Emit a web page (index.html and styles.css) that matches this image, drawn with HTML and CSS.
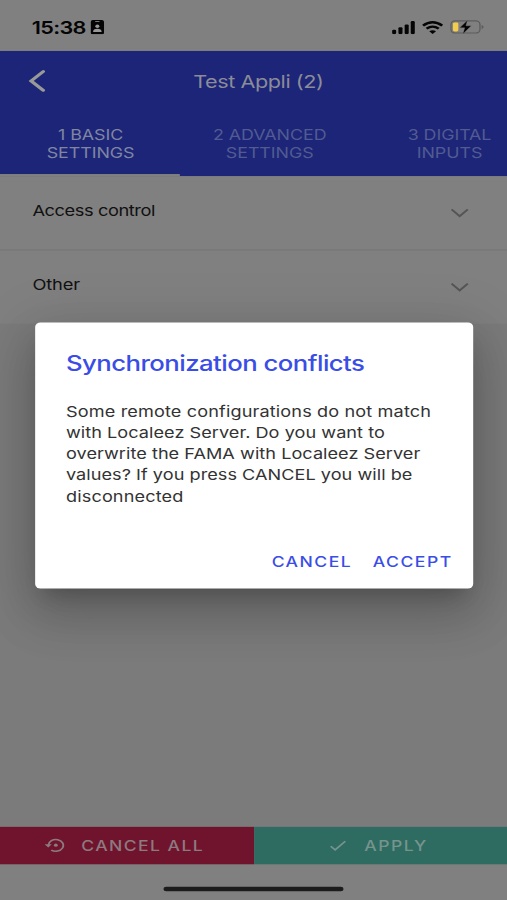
FILE: index.html
```html
<!DOCTYPE html>
<html lang="en">
<head>
<meta charset="utf-8">
<title>Test Appli (2)</title>
<link rel="stylesheet" href="styles.css">
</head>
<body>
<div class="screen">
  <div class="status">
    <span class="time">15:38</span>
    <svg class="badge" width="10" height="13" viewBox="0 0 10 13"><rect width="10" height="13" rx="2" fill="#050505"/><path d="M3.4 1.4h3.2" stroke="#777" stroke-width=".9"/><circle cx="5" cy="5.7" r="1.5" fill="#999"/><path d="M1.9 10.8V9.9Q2.4 8 5 8t3.1 1.9v.9z" fill="#999"/></svg>
    <span class="spacer"></span>
    <svg class="signal" width="17" height="12" viewBox="0 0 17 12" fill="#050505"><rect y="7.8" width="3" height="4" rx="1"/><rect x="4.7" y="5.6" width="3" height="6.2" rx="1"/><rect x="9.3" y="3" width="3" height="8.8" rx="1"/><rect x="13.8" y="0" width="3" height="11.8" rx="1"/></svg>
    <svg class="wifi" width="16" height="12" viewBox="0 0 16 12" fill="none" stroke="#050505" stroke-width="2.1"><path d="M.9 4.2Q8-2 15.1 4.2M3.5 6.9q4.5-3.7 9 0"/><path d="M5.5 9.2q2.5-2 5 0L8 11.7z" fill="#050505" stroke="none"/></svg>
    <svg class="battery" width="25" height="13" viewBox="0 0 25 13"><rect x=".5" y=".8" width="21.5" height="11" rx="3.2" fill="none" stroke="#5c5c5c"/><path d="M23.2 4.6q1.5.4 1.5 1.8t-1.5 1.8z" fill="#5c5c5c"/><rect x="2" y="2.2" width="4" height="8.2" rx="1.3" fill="#f2cd4d"/><path d="M12.8.2 7 7.1h3.7l-1.3 5.5 6.2-7.3h-4z" fill="#050505" stroke="#808080" stroke-width=".3"/></svg>
  </div>
  <header class="header">
    <div class="titlebar">
      <svg class="back" width="13" height="20" viewBox="0 0 13 20" fill="none" stroke="#999a98" stroke-width="2.6" stroke-linecap="round" stroke-linejoin="miter"><path d="M11 1.5 2 10l9 8.5"/></svg>
      <h1>Test Appli (2)</h1>
    </div>
    <nav class="tabs">
      <div class="tab active">1 BASIC<br>SETTINGS</div>
      <div class="tab">2 ADVANCED<br>SETTINGS</div>
      <div class="tab">3 DIGITAL<br>INPUTS</div>
    </nav>
  </header>
  <main class="list">
    <div class="row"><span class="access">Access control</span><svg class="chev" width="14" height="9" viewBox="0 0 14 9"><path d="m1 1 6 6 6-6"/></svg></div>
    <div class="row"><span class="other">Other</span><svg class="chev" width="14" height="9" viewBox="0 0 14 9"><path d="m1 1 6 6 6-6"/></svg></div>
  </main>
  <footer class="actions">
    <div class="action cancel"><svg width="15" height="13" viewBox="0 0 15 13" fill="none" stroke="#8d7a80" stroke-width="1.4"><path d="M2.8 6.5a5.5 5.3 0 1 1 2.1 4.4"/><path d="M0 5.8h5.3L2.7 8.7z" fill="#8d7a80" stroke="none"/><circle cx="8.3" cy="6.5" r="1.4" fill="#8d7a80" stroke="none"/></svg><span>CANCEL ALL</span></div>
    <div class="action apply"><svg width="12" height="10" viewBox="0 0 12 10" fill="none" stroke="#76948e" stroke-width="1.4"><path d="m.6 5.5 3.3 3.3L11.4 1"/></svg><span>APPLY</span></div>
  </footer>
  <div class="home"><div class="indicator"></div></div>
  <div class="dialog">
    <h2>Synchronization conflicts</h2>
    <p><span class="wide">Some remote configurations do not match</span><br>with Localeez Server. Do you want to<br>overwrite the FAMA with Localeez Server<br>values? If you press CANCEL you will be<br><span class="wide">disconnected</span></p>
    <div class="buttons"><span>CANCEL</span><span>ACCEPT</span></div>
  </div>
</div>
</body>
</html>
```
FILE: styles.css
```css
* { box-sizing: border-box; }
html, body { margin: 0; width: 507px; height: 900px; overflow: hidden; background: #7b7b7b; }
/* 375 x 812 point canvas fitted to the viewport */
.screen {
  position: relative; display: flex; flex-direction: column;
  width: 375px; height: 812px; overflow: hidden;
  transform: scale(1.352, 1.10837); transform-origin: 0 0;
  font-family: Inter, "Liberation Sans", sans-serif; background: #7b7b7b;
}
h1, h2, p { margin: 0; font-weight: 400; }
.status { display: flex; align-items: center; height: 46px; padding: 3px 16.6px 0 23.5px; background: #808080; flex: none; }
.time { font-size: 16px; font-weight: 600; color: #050505; letter-spacing: -.5px; }
.badge { margin-left: 4px; }
.spacer { flex: 1; }
.wifi { margin-left: 5px; }
.battery { margin-left: 5px; }
.header { height: 113.2px; background: #1c2578; flex: none; }
.titlebar { display: grid; grid-template-columns: 50px 1fr 42.8px; align-items: center; height: 54px; }
.back { margin-left: 20.5px; }
.titlebar h1 { text-align: center; font-size: 16px; color: #8b8c98; letter-spacing: -.33px; }
.tabs { display: flex; height: 59.2px; }
.tab { flex: none; width: 133px; padding-top: 12.8px; text-align: center; font-size: 13.2px; line-height: 17px; letter-spacing: -.03px; color: #525b91; border-bottom: 2.2px solid transparent; }
.tab.active { padding-left: 1px; color: #8085a2; border-bottom-color: #808080; }
.list { background: #808080; flex: none; }
.row { display: flex; justify-content: space-between; height: 65.5px; padding: 21.5px 28px 0 24px; font-size: 13.5px; line-height: 18px; color: #111; }
.row + .row { height: 67.3px; padding-top: 22.3px; border-top: 1px solid #747474; }
.access { letter-spacing: -.32px; }
.other { letter-spacing: -.1px; }
.chev { margin-top: 7.5px; fill: none; stroke: #555; stroke-width: 1.6; }
.actions { display: flex; height: 33.8px; margin-top: auto; flex: none; }
.action { display: flex; align-items: center; font-size: 13px; font-weight: 500; letter-spacing: 1.05px; }
.cancel { width: 188px; padding-left: 33px; background: #70142d; color: #8d7a80; }
.cancel span { margin-left: 12.1px; }
.apply { flex: 1; padding-left: 56px; background: #2e6b60; color: #76948e; }
.apply span { margin-left: 13.5px; }
.home { height: 32.5px; padding-top: 20.1px; background: #808080; flex: none; }
.indicator { width: 133px; height: 4.6px; margin: 0 auto; border-radius: 3px; background: #1c1c1c; }
.dialog {
  position: absolute; left: 25.5px; top: 291.3px; width: 324.7px; height: 239.7px;
  padding: 25.3px 15.4px 0 23.3px; background: #fff; border-radius: 4px;
  box-shadow: 0 11px 15px -7px rgba(0,0,0,.2), 0 24px 38px 3px rgba(0,0,0,.14), 0 9px 46px 8px rgba(0,0,0,.12);
}
.dialog h2 { font-size: 19px; line-height: 24px; font-weight: 500; letter-spacing: -.39px; color: #3a4de6; }
.dialog p { margin-top: 21.1px; font-size: 13.4px; line-height: 19.2px; letter-spacing: .03px; color: #333; white-space: nowrap; }
.dialog .wide { letter-spacing: .1px; }
.buttons { display: flex; justify-content: flex-end; gap: 15.2px; margin-top: 39px; font-size: 13px; line-height: 20px; font-weight: 500; letter-spacing: 1.1px; color: #3a4de6; }
```
